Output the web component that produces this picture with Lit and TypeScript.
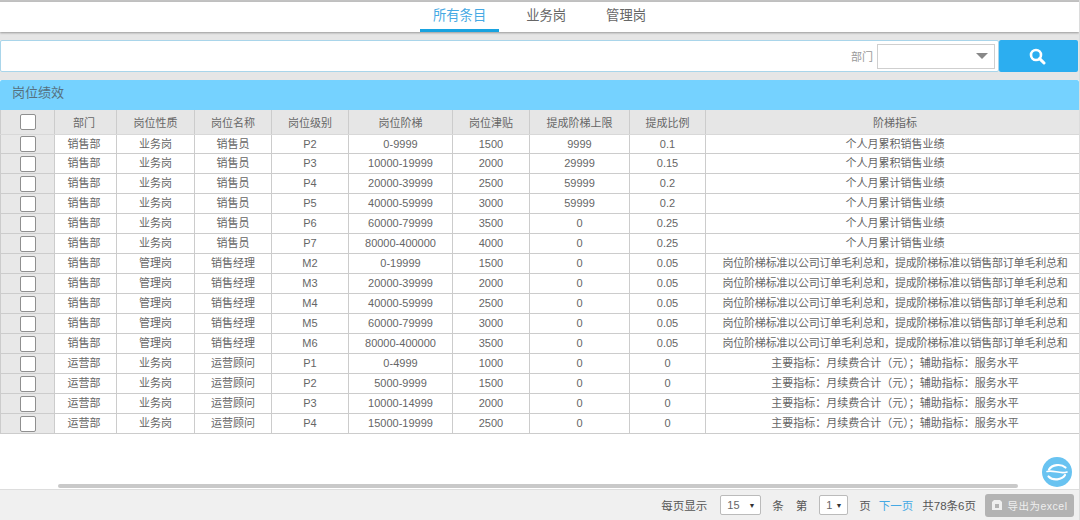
import { LitElement, html, css, svg } from "lit";
import { customElement } from "lit/decorators.js";

type Row = [string, string, string, string, string, string, string, string, string];
const A = "个人月累积销售业绩";
const B = "个人月累计销售业绩";
const C = "岗位阶梯标准以公司订单毛利总和，提成阶梯标准以销售部订单毛利总和";
const D = "主要指标：月续费合计（元）；辅助指标：服务水平";
const S = "销售部", O = "运营部", Y = "业务岗", G = "管理岗", R = "销售员", M = "销售经理", W = "运营顾问";
const rows: Row[] = [
  [S, Y, R, "P2", "0-9999", "1500", "9999", "0.1", A],
  [S, Y, R, "P3", "10000-19999", "2000", "29999", "0.15", A],
  [S, Y, R, "P4", "20000-39999", "2500", "59999", "0.2", B],
  [S, Y, R, "P5", "40000-59999", "3000", "59999", "0.2", B],
  [S, Y, R, "P6", "60000-79999", "3500", "0", "0.25", B],
  [S, Y, R, "P7", "80000-400000", "4000", "0", "0.25", B],
  [S, G, M, "M2", "0-19999", "1500", "0", "0.05", C],
  [S, G, M, "M3", "20000-39999", "2000", "0", "0.05", C],
  [S, G, M, "M4", "40000-59999", "2500", "0", "0.05", C],
  [S, G, M, "M5", "60000-79999", "3000", "0", "0.05", C],
  [S, G, M, "M6", "80000-400000", "3500", "0", "0.05", C],
  [O, Y, W, "P1", "0-4999", "1000", "0", "0", D],
  [O, Y, W, "P2", "5000-9999", "1500", "0", "0", D],
  [O, Y, W, "P3", "10000-14999", "2000", "0", "0", D],
  [O, Y, W, "P4", "15000-19999", "2500", "0", "0", D],
];
const heads = ["部门", "岗位性质", "岗位名称", "岗位级别", "岗位阶梯", "岗位津贴", "提成阶梯上限", "提成比例", "阶梯指标"];

@customElement("app-root")
export class AppRoot extends LitElement {
  static styles = css`
    :host {
      display: block;
      width: 1080px;
      height: 520px;
      overflow: hidden;
      position: relative;
      background: #fff;
      color: #666;
      font: 11px "Liberation Sans", "Noto Sans CJK SC", sans-serif;
    }
    .page { display: flex; flex-direction: column; height: 520px; }
    .top {
      background: #e6e6e6;
      border-top: 2px solid #c2c2c2;
      height: 80px;
      box-sizing: border-box;
      flex: none;
    }
    .tabs {
      height: 30px;
      margin-right: 1px;
      background: #fff;
      box-shadow: 0 1px 2px #999;
      display: flex;
      justify-content: center;
      gap: 14px;
      box-sizing: border-box;
      font-size: 13.3px;
      color: #666;
    }
    .tabs div {
      padding: 0 13px;
      line-height: 28px;
      height: 30px;
      box-sizing: border-box;
    }
    .tabs .on { color: #45a9e4; border-bottom: 3px solid #18a3e0; }
    .search {
      margin: 8px 2px 0 0;
      height: 32px;
      display: flex;
      align-items: stretch;
    }
    .field {
      flex: 1;
      background: #fff;
      border: 1px solid #a9d5ea;
      border-radius: 2px;
      display: flex;
      align-items: center;
      justify-content: flex-end;
      gap: 4px;
      padding-right: 3px;
      font-size: 11px;
      color: #999;
    }
    .pick {
      width: 118px;
      height: 25px;
      box-sizing: border-box;
      border: 1px solid #cfcfcf;
      background: #fff;
      display: flex;
      align-items: center;
      justify-content: flex-end;
      padding-right: 6px;
    }
    .tri { width: 0; height: 0; border: 6px solid transparent; border-top: 6px solid #888; border-bottom: 0; }
    .go {
      width: 79px;
      box-sizing: border-box;
      padding-right: 3px;
      background: #2caef0;
      display: flex;
      align-items: center;
      justify-content: center;
      border-radius: 2px;
    }
    .title {
      height: 30px;
      margin-right: 1px;
      background: #75d2ff;
      border-radius: 2px 2px 0 0;
      padding-left: 12px;
      line-height: 25px;
      font-size: 13px;
      color: #56707e;
      flex: none;
    }
    .grid { display: flex; flex-direction: column; flex: none; }
    .row {
      display: grid;
      grid-template-columns: 55px 62px 78px 77px 77px 104px 77px 100px 76px 374px;
      height: 20px;
      box-sizing: border-box;
      border-bottom: 1px solid #ccc;
    }
    .head { height: 25px; background: #e6e6e6; border-bottom: 1px solid #d8d8d8; }
    .head + .row { height: 19px; }
    .cell {
      border-right: 1px solid #ccc;
      text-align: center;
      white-space: nowrap;
      overflow: hidden;
      line-height: 19px;
      box-sizing: border-box;
    }
    .head .cell { line-height: 27px; }
    .head + .row .cell { line-height: 18px; }
    .dept { padding-right: 3px; }
    .wide { padding-left: 5px; }
    .tight { letter-spacing: -0.22px; }
    .chk {
      background: #e8e8e8;
      border-left: 1px solid #ccc;
      display: flex;
      align-items: center;
      justify-content: center;
    }
    .head .chk { background: #e6e6e6; }
    .box {
      width: 14px;
      height: 14px;
      background: #fff;
      border: 1px solid #8f8f8f;
      border-radius: 2px;
      flex: none;
    }
    .gap { flex: 1; position: relative; background: #fff; }
    .bar {
      position: absolute;
      left: 58px;
      bottom: 1px;
      width: 960px;
      height: 4px;
      background: #c9c9c9;
      border-radius: 2px;
    }
    .foot {
      height: 31px;
      flex: none;
      margin-right: 1px;
      background: #f0f0f0;
      border-top: 1px solid #ddd;
      box-sizing: border-box;
      display: flex;
      align-items: center;
      justify-content: flex-end;
      padding-right: 5px;
      font-size: 11.5px;
      color: #555;
    }
    .sel {
      height: 20px;
      box-sizing: border-box;
      background: #fff;
      border: 1px solid #bbb;
      border-radius: 2px;
      display: flex;
      align-items: center;
      justify-content: space-between;
      padding: 0 5px 0 6px;
      font-size: 11px;
      color: #666;
    }
    .sel i { font-style: normal; font-size: 7px; color: #333; }
    .s1 { width: 41px; margin: 0 11px 0 13px; }
    .s2 { width: 29px; margin: 0 11px 0 12px; }
    .di { margin-left: 12px; }
    .link { color: #45a9e4; margin: 0 9px 0 8px; }
    .excel {
      width: 89px;
      height: 23px;
      margin-left: 9px;
      background: #b3b3b3;
      border-radius: 3px;
      color: #efefef;
      display: flex;
      align-items: center;
      justify-content: center;
      gap: 4px;
      font-size: 10.5px;
      letter-spacing: 0.5px;
    }
    .float {
      position: absolute;
      left: 1042px;
      top: 457px;
      width: 30px;
      height: 30px;
    }
    .r-edge { position: absolute; right: 0; top: 0; width: 1px; height: 520px; background: #dcdcdc; }
  `;

  private mag = svg`<circle cx="8" cy="8" r="5" fill="none" stroke="#fff" stroke-width="2.6"/><path d="M11.6 11.6 L16 16" stroke="#fff" stroke-width="3" stroke-linecap="round"/>`;

  private cls(i: number, text: string) {
    if (i === 0) return "cell dept";
    if (i < 8) return "cell";
    return text === C ? "cell wide tight" : "cell wide";
  }

  render() {
    return html`
      <div class="page">
        <div class="top">
          <div class="tabs">
            <div class="on">所有条目</div><div>业务岗</div><div>管理岗</div>
          </div>
          <div class="search">
            <div class="field">
              <span>部门</span>
              <div class="pick"><div class="tri"></div></div>
            </div>
            <div class="go"><svg width="18" height="18" viewBox="0 0 18 18">${this.mag}</svg></div>
          </div>
        </div>
        <div class="title">岗位绩效</div>
        <div class="grid">
          <div class="row head">
            <div class="cell chk"><div class="box"></div></div>
            ${heads.map((h, i) => html`<div class=${this.cls(i, h)}>${h}</div>`)}
          </div>
          ${rows.map(
            (r) => html`<div class="row">
              <div class="cell chk"><div class="box"></div></div>
              ${r.map((c, i) => html`<div class=${this.cls(i, c)}>${c}</div>`)}
            </div>`
          )}
        </div>
        <div class="gap"><div class="bar"></div></div>
        <div class="foot">
          <span>每页显示</span>
          <div class="sel s1"><span>15</span><i>▼</i></div>
          <span>条</span><span class="di">第</span>
          <div class="sel s2"><span>1</span><i>▼</i></div>
          <span>页</span>
          <span class="link">下一页</span>
          <span>共78条6页</span>
          <div class="excel">
            <svg width="12" height="12" viewBox="0 0 12 12"><path d="M3 1 H9 L11 3 V11 H1 V3 Z" fill="#efefef"/><rect x="4" y="5" width="4" height="4" fill="#b3b3b3"/></svg>
            <span>导出为excel</span>
          </div>
        </div>
      </div>
      <svg class="float" viewBox="0 0 30 30">
        <circle cx="15" cy="15" r="15" fill="#69c3f1"/>
        <g fill="none" stroke="#fff" stroke-linecap="round">
          <path d="M7 12.5 C10 7.5 19 6.5 23.5 10.5" stroke-width="2.2"/>
          <path d="M5 14.5 C11 12.5 18 17.5 25 15" stroke-width="1.6"/>
          <path d="M23 18 C20 23 11 24 6.5 19.5" stroke-width="2.2"/>
        </g>
      </svg>
      <div class="r-edge"></div>
    `;
  }
}
